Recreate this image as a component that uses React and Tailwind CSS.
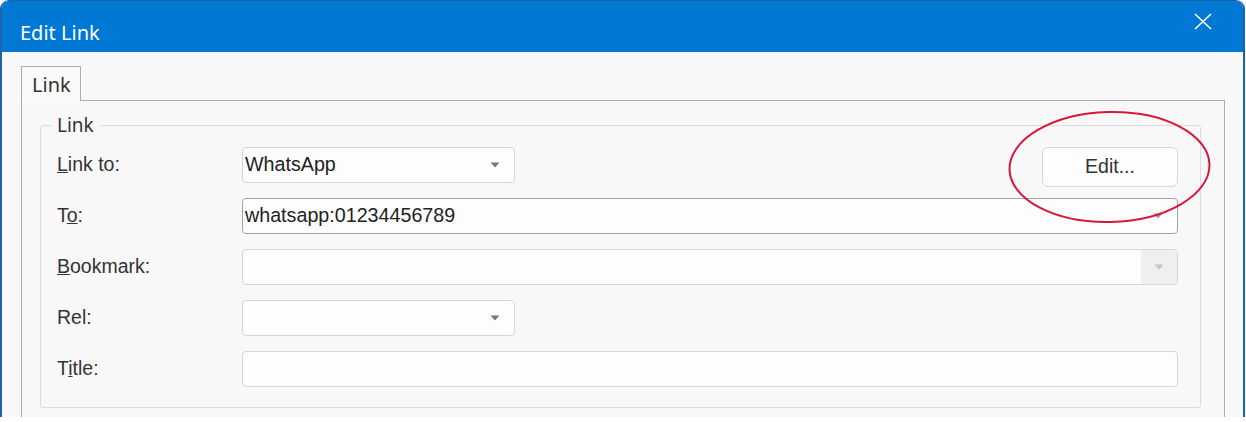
const labelCls = "text-[19.5px] text-[#333] leading-none";
const inputBase = "h-9 rounded-[4px] border bg-[#fdfdfd] text-[19.7px] text-[#222] leading-none flex items-center";

function Arrow({ color = "#777" }) {
  return (
    <svg width="10" height="6" viewBox="0 0 10 6" className="shrink-0">
      <path d="M0.5 0.5 L9.5 0.5 L5 5.5 Z" fill={color} />
    </svg>
  );
}

function Select({ value, width, disabled = false }) {
  return (
    <div className={`${inputBase} border-[#d6d6d6] pl-[2px] pr-[14px] justify-between`} style={{ width }}>
      <span>{value}</span>
      {!disabled && <Arrow />}
    </div>
  );
}

function Row({ label, children }) {
  return (
    <div className="grid grid-cols-[185px_1fr] items-center h-9">
      <div className={labelCls}>{label}</div>
      <div className="flex items-start h-9">{children}</div>
    </div>
  );
}

export default function App() {
  return (
    <div className="w-[1246px] h-[422px] bg-white" style={{ fontFamily: '"Liberation Sans", Arial, sans-serif' }}>
      <div className="relative w-[1245px] h-[417px] rounded-t-[9px] border-x-2 border-t border-[#1b63ad] bg-[#f8f8f8] flex flex-col overflow-hidden">
        {/* title bar */}
        <div className="h-[51px] shrink-0 bg-[#0078d4] flex justify-between items-start pl-[18px] pt-[18px]" style={{ fontFamily: '"Noto Sans", sans-serif' }}>
          <span className="text-[20px] leading-[28px] text-white">Edit Link</span>
          <svg width="18" height="17" viewBox="0 0 18 17" className="mr-[31px] -mt-[6px]">
            <path d="M1 1 L17 16 M17 1 L1 16" stroke="white" strokeWidth="1.6" />
          </svg>
        </div>

        {/* body */}
        <div className="flex-1 flex flex-col pt-[14px] pl-[19px] pr-[18px]">
          <div className="flex">
            <div
              className="relative z-10 -mb-px h-[35px] w-[60px] border border-b-0 border-[#adadad] bg-[#fafafa] pl-[10px] pt-[4px] text-[20px] leading-[28px] text-[#333]"
              style={{ fontFamily: '"Noto Sans", sans-serif' }}
            >
              Link
            </div>
          </div>
          <div className="flex-1 border-x border-t border-[#adadad] pt-[12px] pl-[18px] pr-[23px]">
            <fieldset className="border border-[#dcdcdc] rounded-[3px] pl-[16px] pr-[22px] pb-[20px]">
              <legend
                className="ml-[-6px] px-[6px] text-[19px] leading-[24px] text-[#333]"
                style={{ fontFamily: '"Noto Sans", sans-serif' }}
              >
                Link
              </legend>
              <div className="flex flex-col gap-[15px] pt-[10px]">
                <Row label={<><span className="underline">L</span>ink to:</>}>
                  <Select value="WhatsApp" width={273} />
                  <button className="ml-auto w-[136px] h-[40px] shrink-0 rounded-[6px] border border-[#d8d8d8] bg-[#fdfdfd] text-[19.5px] text-[#333]">
                    Edit...
                  </button>
                </Row>
                <Row label={<>T<span className="underline">o</span>:</>}>
                  <div className={`${inputBase} w-full border-[#a3a3a3] pl-[2px] pr-[14px] justify-between`}>
                    <span>whatsapp:01234456789</span>
                    <Arrow color="#999" />
                  </div>
                </Row>
                <Row label={<><span className="underline">B</span>ookmark:</>}>
                  <div className={`${inputBase} w-full border-[#d6d6d6] overflow-hidden`}>
                    <div className="flex-1" />
                    <div className="w-[36px] h-full bg-[#efefef] flex items-center justify-center">
                      <Arrow color="#c4c4c4" />
                    </div>
                  </div>
                </Row>
                <Row label="Rel:">
                  <Select value="" width={273} />
                </Row>
                <Row label={<>T<span className="underline">i</span>tle:</>}>
                  <div className={`${inputBase} w-full border-[#d6d6d6]`} />
                </Row>
              </div>
            </fieldset>
          </div>
        </div>

        {/* annotation ellipse */}
        <svg className="absolute left-[-2px] top-[-1px] pointer-events-none" width="1245" height="417">
          <ellipse cx="1109.5" cy="167" rx="100" ry="55" fill="none" stroke="#d8173c" strokeWidth="2" transform="rotate(-1.5 1109.5 167)" />
        </svg>
      </div>
    </div>
  );
}
